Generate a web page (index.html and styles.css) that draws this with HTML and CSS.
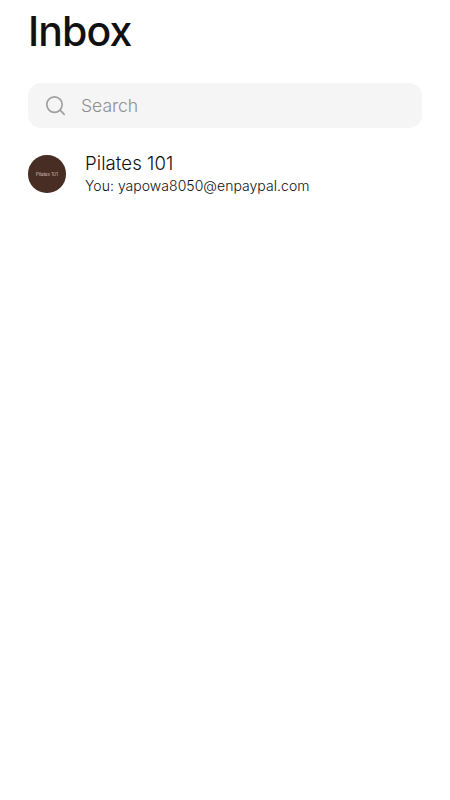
FILE: index.html
```html
<!DOCTYPE html>
<html lang="en">
<head>
<meta charset="utf-8">
<title>Inbox</title>
<link rel="stylesheet" href="styles.css">
</head>
<body>
<main class="inbox">
  <h1 class="title">Inbox</h1>
  <label class="search">
    <svg class="search-icon" viewBox="0 0 20 20" fill="none" stroke="currentColor" stroke-width="1.7" stroke-linecap="round"><circle cx="8.5" cy="8.6" r="7.7"/><path d="M14.1 14.1L18.2 18.4"/></svg>
    <span class="search-text">Search</span>
  </label>
  <article class="chat">
    <div class="avatar"><span class="avatar-text">Pilates 101</span></div>
    <div class="chat-body">
      <h2 class="chat-name">Pilates 101</h2>
      <p class="chat-preview">You: yapowa8050@enpaypal.com</p>
    </div>
  </article>
</main>
</body>
</html>
```
FILE: styles.css
```css
* { box-sizing: border-box; }
body { margin: 0; background: #fff; color: #111; font-family: Inter, "Liberation Sans", sans-serif; }
.inbox { padding: 6px 28px 0; }
.title { margin: 0 0 27px; font: 500 41px/50px Inter, sans-serif; letter-spacing: -.9px; }
.search { display: flex; align-items: center; height: 45px; padding-left: 18px; gap: 15px; border-radius: 13px; background: #f5f5f5; color: #a0a0a0; }
.search-icon { width: 20px; height: 20px; }
.search-text { color: #8f8f8f; font-size: 17.6px; font-weight: 300; line-height: 24px; letter-spacing: -.05px; }
.chat { display: flex; align-items: center; gap: 19px; margin-top: 24px; }
.avatar { display: flex; align-items: center; justify-content: center; width: 37.5px; height: 37.5px; margin-right: .5px; border-radius: 50%; background: #472d23; color: #e5dbd6; }
.avatar-text { font-size: 5px; font-weight: 300; line-height: 7px; letter-spacing: -.15px; white-space: nowrap; }
.chat-name { margin: 0; font-size: 18.6px; font-weight: 350; line-height: 23px; letter-spacing: .07px; }
.chat-preview { margin: 0; font-size: 14px; font-weight: 350; line-height: 21px; letter-spacing: .04px; }
```
